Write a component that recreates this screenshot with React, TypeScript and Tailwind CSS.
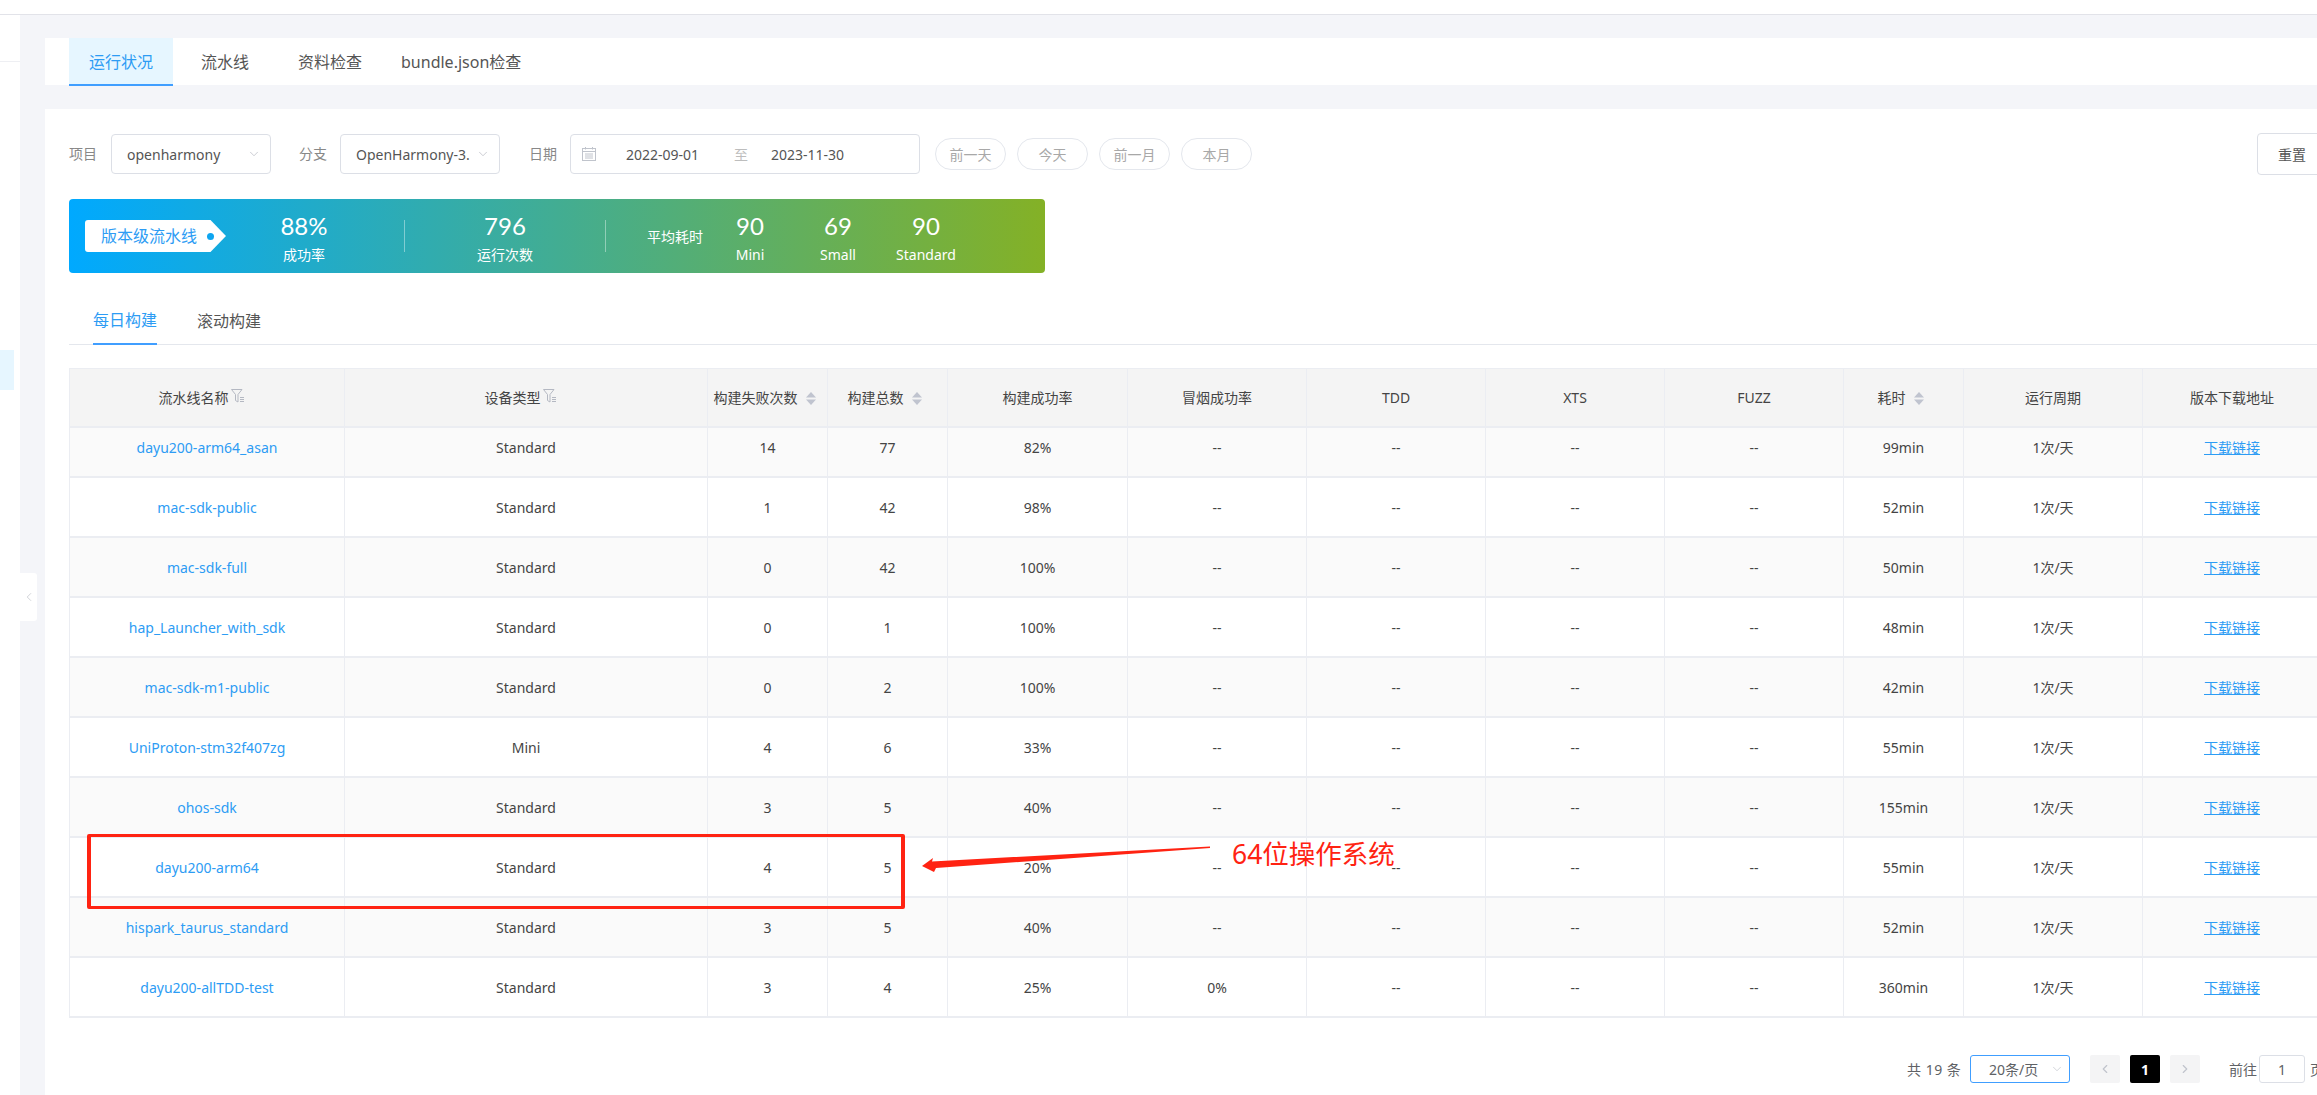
import React from "react";
import { ChevronDown, ChevronLeft, ChevronRight } from "lucide-react";

const FONT = "font-['Noto_Sans','Noto_Sans_CJK_SC',sans-serif]";

type Row = [string, string, string, string, string, string, string];
const rows: Row[] = [
  ["dayu200-arm64_asan", "Standard", "14", "77", "82%", "--", "99min"],
  ["mac-sdk-public", "Standard", "1", "42", "98%", "--", "52min"],
  ["mac-sdk-full", "Standard", "0", "42", "100%", "--", "50min"],
  ["hap_Launcher_with_sdk", "Standard", "0", "1", "100%", "--", "48min"],
  ["mac-sdk-m1-public", "Standard", "0", "2", "100%", "--", "42min"],
  ["UniProton-stm32f407zg", "Mini", "4", "6", "33%", "--", "55min"],
  ["ohos-sdk", "Standard", "3", "5", "40%", "--", "155min"],
  ["dayu200-arm64", "Standard", "4", "5", "20%", "--", "55min"],
  ["hispark_taurus_standard", "Standard", "3", "5", "40%", "--", "52min"],
  ["dayu200-allTDD-test", "Standard", "3", "4", "25%", "0%", "360min"],
];

const widths = [275, 363, 120, 120, 180, 179, 179, 179, 179, 120, 179, 179];

function FilterIcon() {
  return (
    <svg width="15" height="14" viewBox="0 0 15 14" fill="none" stroke="#b4b8c2" strokeWidth="1" className="inline-block ml-[2px] mr-[10px] -mt-[6px] align-middle">
      <path d="M0.5 0.5H11L7 5.5V13L4.5 11.5V5.5Z" />
      <path d="M9 8.5H13M9 10.5H13M9 12.5H13" />
    </svg>
  );
}

function SortIcon() {
  return (
    <svg width="10" height="13" viewBox="0 0 10 13" fill="#c0c4cf" className="inline-block ml-[8px] mr-[6px] -mt-[2px] align-middle">
      <path d="M5 0L10 5.5H0Z" />
      <path d="M5 13L10 7.5H0Z" />
    </svg>
  );
}

function CalendarIcon() {
  return (
    <svg width="14" height="14" viewBox="0 0 14 14" fill="none" stroke="#c0c4cc" strokeWidth="1">
      <rect x="0.5" y="1.5" width="13" height="12" />
      <path d="M0.5 4.5H13.5M3.5 0V2.5M10.5 0V2.5M3 7H11M3 9H11M3 11H11" />
    </svg>
  );
}

function Select({ text }: { text: string }) {
  return (
    <div className="w-[160px] h-[40px] shrink-0 border border-[#dcdfe6] rounded-[4px] flex items-center pl-[15px] pr-[9px] text-[14px] text-[#555]">
      <span className="flex-1 whitespace-nowrap">{text}</span>
      <ChevronDown size={14} strokeWidth={1.2} className="text-[#b4b8c0] shrink-0 ml-[2px]" />
    </div>
  );
}

function Pill({ text }: { text: string }) {
  return (
    <div className="w-[71px] h-[32px] shrink-0 border border-[#e4e7ed] rounded-full flex items-center justify-center text-[14px] text-[#a8a8a8]">
      {text}
    </div>
  );
}

function Stat({ value, label, className }: { value: string; label: string; className: string }) {
  return (
    <div className={`flex flex-col items-center pt-[11px] text-white ${className}`}>
      <div className="text-[24px] leading-[32px] font-['Lato','Noto_Sans',sans-serif]">{value}</div>
      <div className="text-[14px] leading-[22px] mt-[2px]">{label}</div>
    </div>
  );
}

function Th({ children }: { children: React.ReactNode }) {
  return (
    <th className="h-[60px] p-0 font-normal text-[14px] text-[#444] bg-[#f4f4f4] border-t border-b-2 border-r border-[#ebedf2] whitespace-nowrap">
      {children}
    </th>
  );
}

function Td({ children, first, clsName }: { children: React.ReactNode; first: boolean; clsName?: string }) {
  return (
    <td className={`p-0 text-center text-[14px] text-[#444] border-b-2 border-r border-[#ebedf2] whitespace-nowrap ${first ? "pb-[9px]" : ""} ${clsName ?? ""}`}>
      {children}
    </td>
  );
}

export default function App() {
  return (
    <div className={`relative w-[2317px] h-[1095px] overflow-hidden bg-white flex flex-col ${FONT}`}>
      <div className="h-[15px] shrink-0 bg-white border-b border-[#e2e3e9]" />
      <div className="flex-1 flex min-h-0">
        <aside className="w-[20px] shrink-0 bg-white">
          <div className="h-[47px] border-b border-[#eeeff3]" />
          <div className="mt-[288px] w-[14px] h-[40px] bg-[#e6f6ff]" />
        </aside>
        <main className="flex-1 min-w-0 bg-[#f4f5f9] pl-[25px] pt-[23px] flex flex-col">
          <div className="h-[47px] shrink-0 bg-white flex pl-[24px] text-[16px] text-[#555]">
            <div className="w-[104px] h-[48px] bg-[#e6f6ff] border-b-2 border-[#409eff] text-[#2d9cf4] flex items-center justify-center pt-[1px]">运行状况</div>
            <div className="ml-[28px] h-[47px] flex items-center pt-[1px]">流水线</div>
            <div className="ml-[49px] h-[47px] flex items-center pt-[1px]">资料检查</div>
            <div className="ml-[39px] h-[47px] flex items-center pt-[1px]">bundle.json检查</div>
          </div>

          <section className="mt-[24px] flex-1 min-h-0 bg-white pl-[24px] pt-[25px] overflow-hidden">
            <div className="flex items-center h-[40px] w-max text-[14px]">
              <span className="w-[28px] shrink-0 text-[#888] whitespace-nowrap -mt-[2px]">项目</span>
              <div className="ml-[14px]"><Select text="openharmony" /></div>
              <span className="ml-[28px] w-[28px] shrink-0 text-[#888] whitespace-nowrap -mt-[2px]">分支</span>
              <div className="ml-[13px]"><Select text="OpenHarmony-3." /></div>
              <span className="ml-[29px] w-[28px] shrink-0 text-[#888] whitespace-nowrap -mt-[2px]">日期</span>
              <div className="ml-[13px] w-[350px] h-[40px] shrink-0 border border-[#dcdfe6] rounded-[4px] flex items-center pl-[11px] text-[#555]">
                <CalendarIcon />
                <span className="ml-[30px] w-[77px] whitespace-nowrap">2022-09-01</span>
                <span className="ml-[31px] text-[#bdbdbd]">至</span>
                <span className="ml-[23px] w-[77px] whitespace-nowrap">2023-11-30</span>
              </div>
              <div className="ml-[15px] flex gap-[11px]">
                <Pill text="前一天" />
                <Pill text="今天" />
                <Pill text="前一月" />
                <Pill text="本月" />
              </div>
              <div className="ml-[1005px] w-[80px] h-[42px] shrink-0 border border-[#dcdfe6] rounded-[4px] flex items-center pl-[20px] text-[#555]">重置</div>
            </div>

            <div className="mt-[25px] w-[976px] h-[74px] rounded-[4px] bg-[linear-gradient(90deg,#00a9ff,#84b126)] flex items-start">
              <div className="ml-[16px] mt-[21px] w-[141px] h-[32px] shrink-0 bg-white rounded-l-[3px] [clip-path:polygon(0_0,89%_0,100%_50%,89%_100%,0_100%)] flex items-center pl-[16px] text-[16px] text-[#2d9cf4] whitespace-nowrap">
                版本级流水线
                <span className="ml-[10px] w-[7px] h-[7px] rounded-full bg-[#0ea5f0]" />
              </div>
              <Stat value="88%" label="成功率" className="ml-[50px] w-[56px]" />
              <div className="ml-[72px] mt-[21px] w-px h-[32px] bg-white/40" />
              <Stat value="796" label="运行次数" className="ml-[50px] w-[100px]" />
              <div className="ml-[50px] mt-[21px] w-px h-[32px] bg-white/40" />
              <div className="ml-[41px] mt-[28px] w-[56px] h-[20px] text-[14px] leading-[20px] text-white whitespace-nowrap">平均耗时</div>
              <Stat value="90" label="Mini" className="ml-[3px] w-[88px]" />
              <Stat value="69" label="Small" className="w-[88px]" />
              <Stat value="90" label="Standard" className="w-[88px]" />
            </div>

            <div className="mt-[24px] h-[48px] border-b border-[#e4e7ed] flex pl-[24px] text-[16px] text-[#555]">
              <div className="h-[48px] border-b-2 border-[#409eff] text-[#2d9cf4] flex items-center">每日构建</div>
              <div className="ml-[40px] h-[47px] flex items-center">滚动构建</div>
            </div>

            <table className="mt-[23px] table-fixed border-separate border-spacing-0 w-[2251px] border-l border-[#ebedf2]">
              <colgroup>
                {widths.map((w, i) => (
                  <col key={i} style={{ width: w }} />
                ))}
              </colgroup>
              <thead>
                <tr>
                  <Th>流水线名称<FilterIcon /></Th>
                  <Th>设备类型<FilterIcon /></Th>
                  <Th>构建失败次数<SortIcon /></Th>
                  <Th>构建总数<SortIcon /></Th>
                  <Th>构建成功率</Th>
                  <Th>冒烟成功率</Th>
                  <Th>TDD</Th>
                  <Th>XTS</Th>
                  <Th>FUZZ</Th>
                  <Th>耗时<SortIcon /></Th>
                  <Th>运行周期</Th>
                  <Th>版本下载地址</Th>
                </tr>
              </thead>
              <tbody>
                {rows.map((r, i) => {
                  const first = i === 0;
                  return (
                    <tr key={r[0]} className={`${first ? "h-[50px]" : "h-[60px]"} ${i % 2 === 0 ? "bg-[#fafafa]" : "bg-white"}`}>
                      <Td first={first} clsName="!text-[#2d9cf4]">{r[0]}</Td>
                      <Td first={first}>{r[1]}</Td>
                      <Td first={first}>{r[2]}</Td>
                      <Td first={first}>{r[3]}</Td>
                      <Td first={first}>{r[4]}</Td>
                      <Td first={first}>{r[5]}</Td>
                      <Td first={first}>--</Td>
                      <Td first={first}>--</Td>
                      <Td first={first}>--</Td>
                      <Td first={first}>{r[6]}</Td>
                      <Td first={first}>1次/天</Td>
                      <Td first={first} clsName="!text-[#2d9cf4] underline">下载链接</Td>
                    </tr>
                  );
                })}
              </tbody>
            </table>

            <div className="mt-[37px] ml-[1838px] h-[28px] w-max flex items-center text-[14px] text-[#606266] whitespace-nowrap">
              <span className="w-[48px] shrink-0 tracking-[0.5px]">共 19 条</span>
              <div className="ml-[15px] w-[100px] h-[28px] shrink-0 border border-[#409eff] rounded-[3px] flex items-center pl-[18px] pr-[5px]">
                <span className="flex-1">20条/页</span>
                <ChevronDown size={14} strokeWidth={1.2} className="text-[#c0c4cc]" />
              </div>
              <div className="ml-[20px] w-[30px] h-[28px] shrink-0 bg-[#f4f4f5] rounded-[2px] flex items-center justify-center">
                <ChevronLeft size={14} strokeWidth={2} className="text-[#c0c4cc]" />
              </div>
              <div className="ml-[10px] w-[30px] h-[28px] shrink-0 bg-black rounded-[2px] flex items-center justify-center text-white font-bold">1</div>
              <div className="ml-[10px] w-[30px] h-[28px] shrink-0 bg-[#f4f4f5] rounded-[2px] flex items-center justify-center">
                <ChevronRight size={14} strokeWidth={2} className="text-[#c0c4cc]" />
              </div>
              <span className="ml-[29px] shrink-0">前往</span>
              <div className="ml-[2px] w-[46px] h-[28px] shrink-0 border border-[#dcdfe6] rounded-[3px] flex items-center justify-center">1</div>
              <span className="ml-[5px] shrink-0">页</span>
            </div>
          </section>
        </main>
      </div>

      {/* sidebar collapse handle */}
      <div className="absolute left-[20px] top-[573px] w-[17px] h-[48px] bg-white rounded-r-[3px] flex items-center justify-center">
        <ChevronLeft size={14} strokeWidth={1} className="text-[#b0b4bc]" />
      </div>

      {/* red annotation */}
      <div className="absolute left-[87px] top-[834px] w-[818px] h-[75px] border-x-4 border-y-[3px] border-[#ff2312] rounded-[2px]" />
      <svg className="absolute left-[915px] top-[840px]" width="300" height="40" viewBox="915 840 300 40" fill="#ff2312">
        <polygon points="922,866 933,858 932,861.5 1210,846.5 1210,848 936,868 934,872" />
      </svg>
      <div className="absolute left-[1232px] top-[836px] text-[26.5px] leading-[36px] text-[#ff2312] whitespace-nowrap">64位操作系统</div>
    </div>
  );
}
